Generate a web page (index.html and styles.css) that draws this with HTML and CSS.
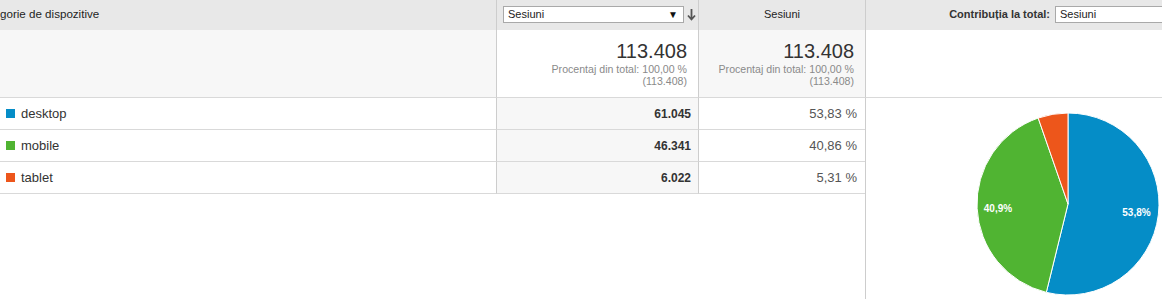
FILE: index.html
```html
<!DOCTYPE html>
<html lang="ro">
<head>
<meta charset="utf-8">
<title>Categorie de dispozitive</title>
<link rel="stylesheet" href="styles.css">
</head>
<body>
<div class="report">
  <div class="cell hdr hdr-dim"><span class="dim-title">Categorie de dispozitive</span></div>
  <div class="cell hdr hdr-m1">
    <div class="select select-metric"><span>Sesiuni</span><span class="caret">▼</span></div>
    <svg class="sort-arrow" width="9" height="13" viewBox="0 0 9 13"><path d="M4.5 1 V11 M1 7.5 L4.5 11.5 L8 7.5" fill="none" stroke="#555" stroke-width="1.8"/></svg>
  </div>
  <div class="cell hdr hdr-m2">Sesiuni</div>
  <div class="cell hdr hdr-chart">
    <span class="contrib-label">Contribuția la total:</span>
    <div class="select select-contrib"><span>Sesiuni</span></div>
  </div>

  <div class="cell total total-dim"></div>
  <div class="cell total total-m1">
    <div class="big">113.408</div>
    <div class="sub">Procentaj din total: 100,00 %</div>
    <div class="sub">(113.408)</div>
  </div>
  <div class="cell total total-m2">
    <div class="big">113.408</div>
    <div class="sub">Procentaj din total: 100,00 %</div>
    <div class="sub">(113.408)</div>
  </div>
  <div class="cell total total-chart"></div>

  <div class="cell row dim"><i class="swatch sw-desktop"></i>desktop</div>
  <div class="cell row m1">61.045</div>
  <div class="cell row m2">53,83 %</div>

  <div class="cell row dim"><i class="swatch sw-mobile"></i>mobile</div>
  <div class="cell row m1">46.341</div>
  <div class="cell row m2">40,86 %</div>

  <div class="cell row dim"><i class="swatch sw-tablet"></i>tablet</div>
  <div class="cell row m1">6.022</div>
  <div class="cell row m2">5,31 %</div>

  <div class="cell chart">
    <svg class="pie" width="296" height="201" viewBox="0 0 296 201">
      <path d="M202 106 L202 15 A91 91 0 1 1 180.32 194.38 Z" fill="#058dc7" stroke="#fff" stroke-width="1"/>
      <path d="M202 106 L180.32 194.38 A91 91 0 0 1 172.2 20.02 Z" fill="#50b432" stroke="#fff" stroke-width="1"/>
      <path d="M202 106 L172.2 20.02 A91 91 0 0 1 202 15 Z" fill="#ed561b" stroke="#fff" stroke-width="1"/>
      <text x="270.5" y="118" class="pie-label" text-anchor="middle">53,8%</text>
      <text x="132" y="114" class="pie-label" text-anchor="middle">40,9%</text>
    </svg>
  </div>
</div>
</body>
</html>
```

FILE: styles.css
```css
* { box-sizing: border-box; }
html, body { margin: 0; padding: 0; background: #fff; }
body {
  font-family: "Liberation Sans", Arial, sans-serif;
  color: #333;
  overflow: hidden;
}
.report {
  display: grid;
  grid-template-columns: 497px 202px 166px 1fr;
  grid-template-rows: 30px 68px 32px 32px 32px 1fr;
  height: 299px;
  width: 1162px;
}
.cell { min-width: 0; }

/* header row */
.hdr {
  background: #e8e8e8;
  display: flex;
  align-items: center;
  padding-bottom: 3px;
  font-size: 11px;
  color: #1e1e1e;
  overflow: hidden;
  white-space: nowrap;
}
.hdr-dim { border-right: 1px solid #cdcdcd; font-size: 11.6px; }
.dim-title { margin-left: -24.5px; }
.hdr-m1 { border-right: 1px solid #cdcdcd; padding-left: 6px; padding-bottom: 2px; gap: 3px; }
.hdr-m2 { justify-content: center; }
.hdr-chart {
  border-left: 1px solid #cdcdcd;
  justify-content: flex-end;
  gap: 5px;
  padding-bottom: 2px;
}
.contrib-label { font-weight: bold; color: #333; }
.select {
  height: 17px;
  background: #fff;
  border: 1px solid #a9a9a9;
  display: flex;
  align-items: center;
  padding: 0 4px;
  font-size: 11px;
  color: #222;
  flex-shrink: 0;
}
.select-metric { width: 181px; justify-content: space-between; }
.caret { font-size: 10px; color: #111; margin-right: 1px; }
.select-contrib { width: 120px; margin-right: -13px; }
.sort-arrow { display: block; flex-shrink: 0; margin-top: 1px; }

/* total row */
.total {
  border-bottom: 1px solid #d9d9d9;
  text-align: right;
  padding: 10px 11px 0 0;
}
.total-dim { background: #f7f7f7; border-right: 1px solid #cdcdcd; }
.total-m1 { background: #fff; border-right: 1px solid #cdcdcd; }
.total-m2 { background: #f7f7f7; }
.total-chart { border-left: 1px solid #cdcdcd; background: #fff; }
.big { font-size: 20px; line-height: 22px; color: #333; margin-bottom: 1px; }
.sub { font-size: 10.6px; line-height: 12px; color: #8a8a8a; }

/* data rows */
.row {
  border-bottom: 1px solid #d9d9d9;
  display: flex;
  align-items: center;
  white-space: nowrap;
}
.dim {
  border-right: 1px solid #cdcdcd;
  font-size: 13px;
  color: #333;
  padding-left: 6px;
  gap: 6px;
}
.m1 {
  background: #f7f7f7;
  border-right: 1px solid #cdcdcd;
  justify-content: flex-end;
  padding-right: 7px;
  font-size: 12px;
  font-weight: bold;
  color: #333;
}
.m2 {
  justify-content: flex-end;
  padding-right: 8px;
  font-size: 13px;
  color: #555;
}
.swatch { display: block; width: 9px; height: 9px; }
.sw-desktop { background: #058dc7; }
.sw-mobile { background: #50b432; }
.sw-tablet { background: #ed561b; }

/* chart */
.chart {
  grid-column: 4;
  grid-row: 3 / -1;
  border-left: 1px solid #cdcdcd;
  background: #fff;
}
.pie { display: block; }
.pie-label {
  font-family: "Liberation Sans", Arial, sans-serif;
  font-size: 10px;
  font-weight: bold;
  fill: #fff;
}
```
